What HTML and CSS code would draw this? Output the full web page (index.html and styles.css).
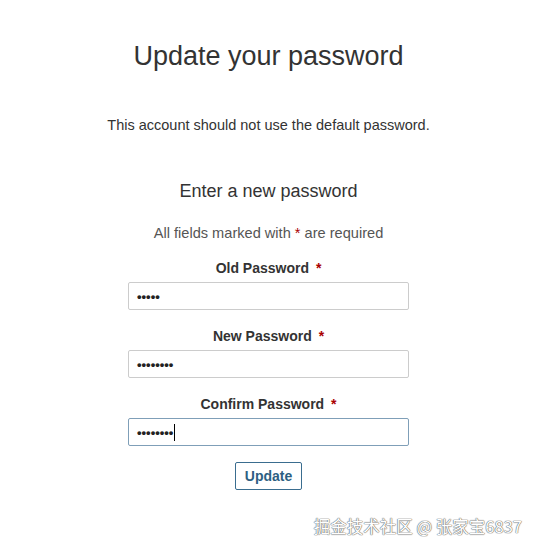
FILE: index.html
```html
<!DOCTYPE html>
<html>
<head>
<meta charset="utf-8">
<link rel="stylesheet" href="styles.css">
</head>
<body>
<div class="page">
  <h1 class="title">Update your password</h1>
  <p class="notice">This account should not use the default password.</p>
  <h2 class="subtitle">Enter a new password</h2>
  <p class="required-note">All fields marked with <span class="star">*</span> are required</p>
  <form class="form">
    <div class="field">
      <label class="label">Old Password <span class="star">*</span></label>
      <div class="input"><span class="dots">•••••</span></div>
    </div>
    <div class="field">
      <label class="label">New Password <span class="star">*</span></label>
      <div class="input"><span class="dots">••••••••</span></div>
    </div>
    <div class="field">
      <label class="label">Confirm Password <span class="star">*</span></label>
      <div class="input focused"><span class="dots">••••••••</span><span class="caret"></span></div>
    </div>
    <button class="btn" type="button">Update</button>
  </form>
</div>
<div class="watermark">掘金技术社区 @ 张家宝6837</div>
</body>
</html>
```
FILE: styles.css
```css
html, body {
  margin: 0;
  padding: 0;
  background: #fff;
}
body {
  font-family: "Liberation Sans", Arial, sans-serif;
  color: #333;
  width: 537px;
  height: 552px;
  overflow: hidden;
  position: relative;
}
.page {
  display: flex;
  flex-direction: column;
  align-items: center;
  padding-top: 38px;
}
.title {
  margin: 0;
  font-size: 27px;
  font-weight: normal;
  line-height: 36px;
  color: #333;
}
.notice {
  margin: 0;
  margin-top: 42px;
  font-size: 14.5px;
  line-height: 18px;
  color: #333;
}
.subtitle {
  margin: 0;
  margin-top: 46px;
  font-size: 18px;
  font-weight: normal;
  line-height: 22px;
  color: #333;
}
.required-note {
  margin: 0;
  margin-top: 22px;
  font-size: 14.6px;
  line-height: 18px;
  color: #555;
}
.star {
  color: #a00;
}
.form {
  display: flex;
  flex-direction: column;
  align-items: center;
  margin-top: 17px;
}
.field {
  display: flex;
  flex-direction: column;
  align-items: center;
  margin-bottom: 17px;
}
.field:last-of-type {
  margin-bottom: 16px;
}
.label {
  font-size: 14px;
  font-weight: bold;
  line-height: 18px;
  color: #333;
  margin-bottom: 5px;
}
.label .star {
  margin-left: 3px;
}
.input {
  box-sizing: border-box;
  width: 281px;
  height: 28px;
  border: 1px solid #ccc;
  border-radius: 2px;
  padding: 0 8px;
  background: #fff;
  display: flex;
  align-items: center;
}
.input.focused {
  border-color: #7f9fb8;
}
.dots {
  font-family: "Liberation Sans", Arial, sans-serif;
  font-size: 13px;
  font-weight: bold;
  line-height: 1;
  color: #222;
}
.caret {
  display: inline-block;
  width: 1px;
  height: 17px;
  background: #000;
  margin-left: 1px;
}
.btn {
  box-sizing: border-box;
  width: 67px;
  height: 28px;
  border: 1px solid #3a6d8f;
  border-radius: 2px;
  background: #fff;
  color: #2d5f82;
  font-family: "Liberation Sans", Arial, sans-serif;
  font-size: 14px;
  font-weight: bold;
  padding: 0;
}
.watermark {
  position: absolute;
  right: 15px;
  bottom: 16px;
  font-family: "Noto Sans CJK SC", "Liberation Sans", sans-serif;
  font-size: 16.5px;
  line-height: 20px;
  color: #fff;
  text-shadow: 0 0 1px #666, 0 0 1px #666, 0 0 1px #888;
}
```
